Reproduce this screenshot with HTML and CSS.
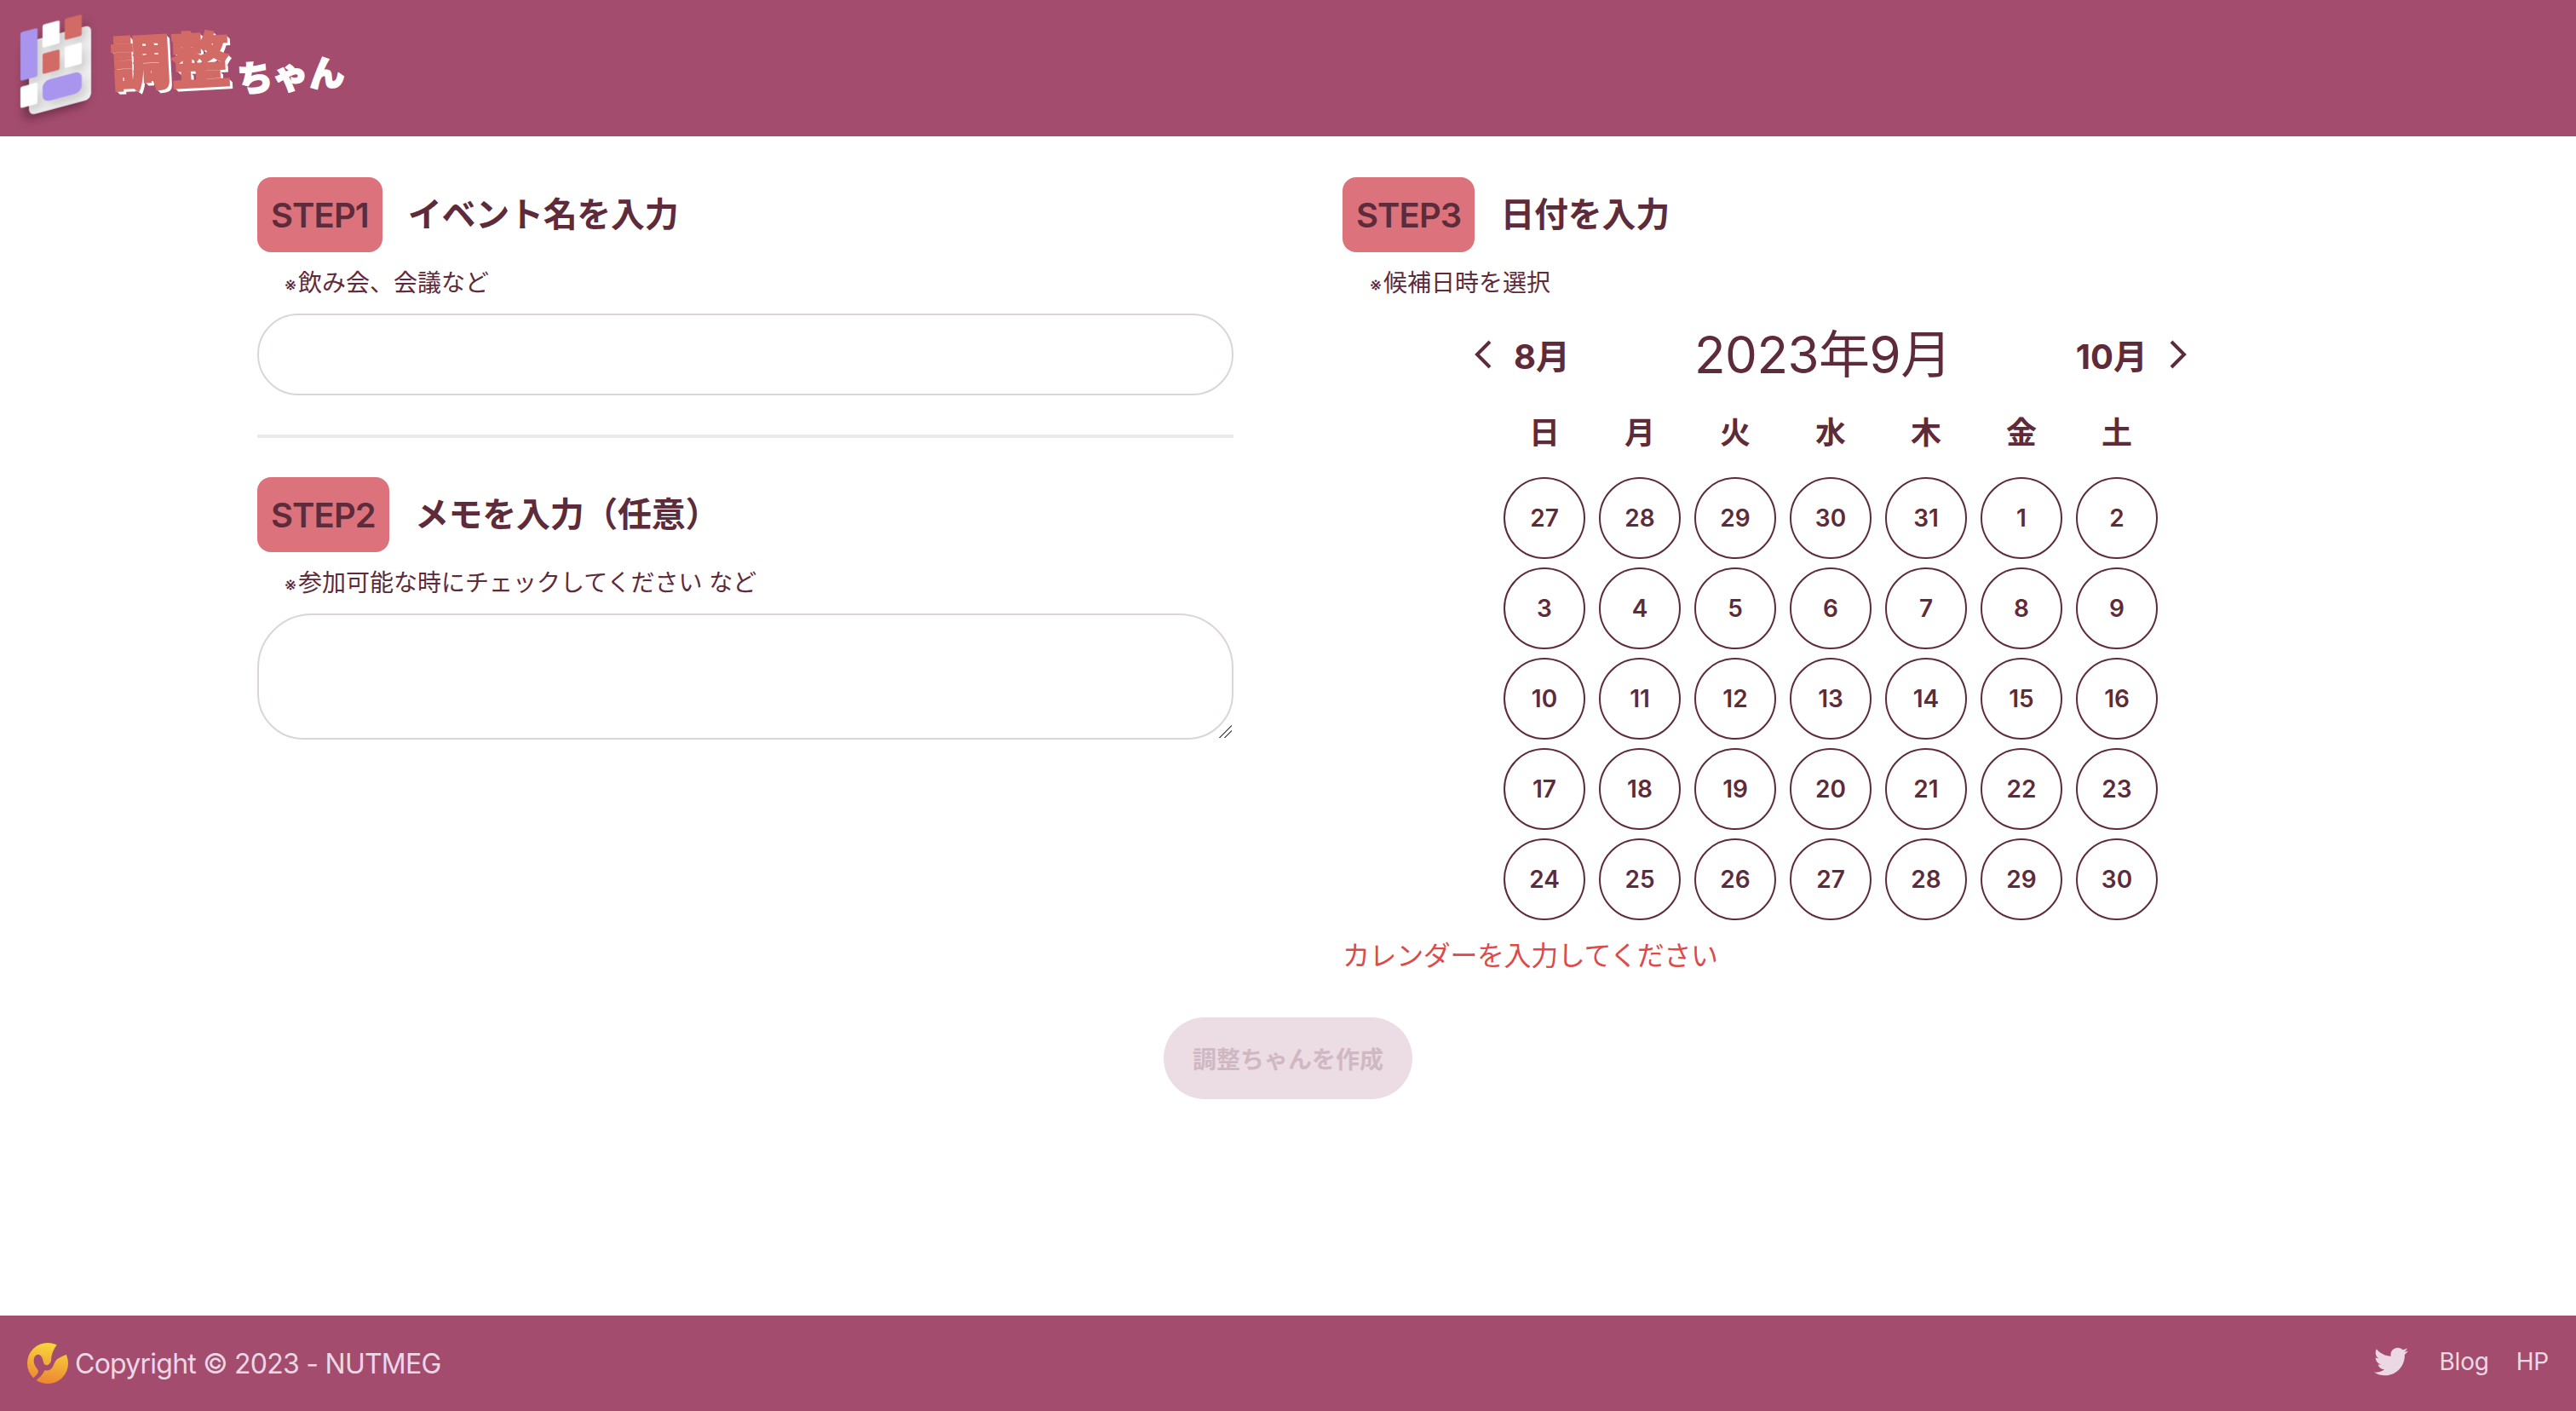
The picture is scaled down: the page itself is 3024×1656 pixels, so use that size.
FILE: index.html
```html
<!DOCTYPE html>
<html lang="ja">
<head>
<meta charset="utf-8">
<title>調整ちゃん</title>
<link rel="stylesheet" href="styles.css">
</head>
<body>
<header class="site-header">
  <svg class="logo-mark" viewBox="0 0 130 150" width="130" height="150" aria-hidden="true">
    <g transform="skewY(-15)">
      <rect class="plate" x="34" y="57.7" width="73" height="87" rx="7"/>
      <rect class="tile purple" x="24" y="44.4" width="20" height="57" rx="2"/>
      <rect class="tile white" x="50" y="42.4" width="20" height="27" rx="2"/>
      <rect class="tile red" x="76" y="42.4" width="20" height="25" rx="2"/>
      <rect class="tile red" x="50" y="76.4" width="20" height="24" rx="2"/>
      <rect class="tile white" x="76" y="75.4" width="20" height="25" rx="2"/>
      <rect class="tile white" x="24" y="108.4" width="20" height="25" rx="2"/>
      <rect class="tile purple" x="50" y="108.7" width="46" height="25" rx="8"/>
    </g>
  </svg>
  <div class="wordmark">
    <span class="word-kanji">調整</span>
    <span class="word-kana">ちゃん</span>
  </div>
</header>

<main class="content">
  <div class="columns">
    <section class="col">
      <div class="step-head">
        <span class="badge">STEP1</span>
        <h2 class="step-title">イベント名を入力</h2>
      </div>
      <p class="note"><span class="mark">※</span>飲み会、会議など</p>
      <input class="field" type="text">
      <hr class="divider">
      <div class="step-head">
        <span class="badge">STEP2</span>
        <h2 class="step-title">メモを入力（任意）</h2>
      </div>
      <p class="note"><span class="mark">※</span>参加可能な時にチェックしてください など</p>
      <textarea class="field area"></textarea>
    </section>

    <section class="col">
      <div class="step-head">
        <span class="badge">STEP3</span>
        <h2 class="step-title">日付を入力</h2>
      </div>
      <p class="note"><span class="mark">※</span>候補日時を選択</p>
      <div class="cal-nav">
        <span class="cal-link">
          <svg class="chev" viewBox="0 0 24 36"><path d="M20 3 5 18l15 15"/></svg>
          <span>8月</span>
        </span>
        <span class="cal-title">2023年9月</span>
        <span class="cal-link">
          <span>10月</span>
          <svg class="chev" viewBox="0 0 24 36"><path d="M4 3l15 15L4 33"/></svg>
        </span>
      </div>
      <div class="cal-grid">
        <span class="dow">日</span><span class="dow">月</span><span class="dow">火</span><span class="dow">水</span><span class="dow">木</span><span class="dow">金</span><span class="dow">土</span>
        <button class="day">27</button><button class="day">28</button><button class="day">29</button><button class="day">30</button><button class="day">31</button><button class="day">1</button><button class="day">2</button>
        <button class="day">3</button><button class="day">4</button><button class="day">5</button><button class="day">6</button><button class="day">7</button><button class="day">8</button><button class="day">9</button>
        <button class="day">10</button><button class="day">11</button><button class="day">12</button><button class="day">13</button><button class="day">14</button><button class="day">15</button><button class="day">16</button>
        <button class="day">17</button><button class="day">18</button><button class="day">19</button><button class="day">20</button><button class="day">21</button><button class="day">22</button><button class="day">23</button>
        <button class="day">24</button><button class="day">25</button><button class="day">26</button><button class="day">27</button><button class="day">28</button><button class="day">29</button><button class="day">30</button>
      </div>
      <p class="error">カレンダーを入力してください</p>
    </section>
  </div>
  <div class="actions">
    <button class="submit" disabled>調整ちゃんを作成</button>
  </div>
</main>

<footer class="site-footer">
  <div class="foot-left">
    <svg class="foot-logo" viewBox="0 0 48 48" width="48" height="48" aria-hidden="true">
      <defs>
        <linearGradient id="nutmeg" x1="0.6" y1="0" x2="0.4" y2="1">
          <stop offset="0" stop-color="#f8d93c"/>
          <stop offset="1" stop-color="#ec8432"/>
        </linearGradient>
      </defs>
      <circle cx="24" cy="24" r="24" fill="url(#nutmeg)"/>
      <path class="foot-swirl" d="M37 0C31 6 28 14 28 21C27 25 24 27 21.5 26C19 25 19 22 18 19C17 15 14 13 11.5 14C8 15 7 20 8 24C9 28 12 30 13 33C13 36 10 39 6 42L9 45C15 41 19 36 20.5 32C23 33 27 33 30 28C32 24 33 20 37 18C40 16 43 15 48 13L46 4L40 -1Z"/>
    </svg>
    <span class="copy">Copyright © 2023 - NUTMEG</span>
  </div>
  <nav class="foot-right">
    <svg class="tw" viewBox="0 0 512 512" width="40" height="40" aria-hidden="true"><path d="M459.37 151.716c.325 4.548.325 9.097.325 13.645 0 138.72-105.583 298.558-298.558 298.558-59.452 0-114.68-17.219-161.137-47.106 8.447.974 16.568 1.299 25.34 1.299 49.055 0 94.213-16.568 130.274-44.832-46.132-.975-84.792-31.188-98.112-72.772 6.498.974 12.995 1.624 19.818 1.624 9.421 0 18.843-1.3 27.614-3.573-48.081-9.747-84.143-51.98-84.143-102.985v-1.299c13.969 7.797 30.214 12.67 47.431 13.319-28.264-18.843-46.781-51.005-46.781-87.391 0-19.492 5.197-37.36 14.294-52.954 51.655 63.675 129.3 105.258 216.365 109.807-1.624-7.797-2.599-15.918-2.599-24.04 0-57.828 46.782-104.934 104.934-104.934 30.213 0 57.502 12.67 76.67 33.137 23.715-4.548 46.456-13.32 66.599-25.34-7.798 24.366-24.366 44.833-46.132 57.827 21.117-2.273 41.584-8.122 60.426-16.243-14.292 20.791-32.161 39.308-52.628 54.253z"/></svg>
    <a class="foot-link">Blog</a>
    <a class="foot-link">HP</a>
  </nav>
</footer>
</body>
</html>
```

FILE: styles.css
```css
* { box-sizing: border-box; }

html, body { height: 100%; }

body {
  margin: 0;
  min-height: 100vh;
  display: flex;
  flex-direction: column;
  background: #fff;
  color: #5e2b3a;
  font-family: Inter, "Noto Sans CJK JP", sans-serif;
}

.site-header {
  flex: none;
  height: 160px;
  background: #a34c6e;
  display: flex;
  align-items: flex-start;
  overflow: hidden;
}

.logo-mark { flex: none; width: 130px; height: 150px; overflow: visible; }
.plate { fill: #f5f4f5; filter: drop-shadow(-5px 5px 6px rgba(50, 10, 30, .4)); }
.tile { filter: drop-shadow(6px 8px 6px rgba(0, 0, 0, .16)); }
.tile.purple { fill: #a995ee; }
.tile.white { fill: #fff; }
.tile.red { fill: #d26a66; }

.wordmark {
  display: flex;
  align-items: flex-end;
  height: 150px;
  padding-bottom: 44px;
}

.word-kanji {
  font-family: "Noto Sans CJK JP", sans-serif;
  font-weight: 900;
  font-size: 70px;
  line-height: 76px;
  color: #d26a66;
  -webkit-text-stroke: 2px #d26a66;
  text-shadow: 1px 1px 0 #fff, 2px 2px 0 #fff, 3px 3px 0 #fff, 4px 4px 0 #fff;
  transform: rotate(-3deg);
}

.word-kana {
  font-family: "Noto Sans CJK JP", sans-serif;
  font-weight: 900;
  font-size: 42px;
  line-height: 48px;
  color: #fff;
  -webkit-text-stroke: 1.5px #fff;
  margin: 0 0 -4px 8px;
  transform: rotate(-4deg);
}

.content {
  flex: 1;
  padding: 48px 302px 0;
}

.columns {
  display: grid;
  grid-template-columns: 1146px 1146px;
  column-gap: 128px;
}

.step-head {
  display: flex;
  align-items: center;
  gap: 30px;
}

.badge {
  height: 88px;
  padding: 0 16px;
  display: flex;
  align-items: center;
  background: #dc737c;
  border-radius: 16px;
  font-size: 40px;
  font-weight: 600;
  letter-spacing: -.9px;
}

.step-title {
  margin: 0;
  font-size: 40px;
  line-height: 56px;
  font-weight: 700;
  letter-spacing: -.3px;
}

.note {
  margin: 16px 0 14px 32px;
  font-size: 28px;
  line-height: 40px;
}

.mark { font-size: 22px; margin-right: 2px; }

.field {
  display: block;
  width: 100%;
  height: 96px;
  margin: 0;
  padding: 0 32px;
  border: 2px solid #dcd5d8;
  border-radius: 48px;
  background: #fff;
  font: inherit;
  outline: none;
}

.field.area {
  height: 148px;
  margin-top: 2px;
  border-radius: 64px 64px 54px 54px;
  padding: 16px 32px;
}

.field.area::-webkit-resizer {
  background: linear-gradient(135deg, transparent 0 48%, #666 48% 56%, transparent 56% 68%, #666 68% 75%, transparent 75%);
}

.divider {
  margin: 46px 0 46px;
  border: 0;
  height: 4px;
  background: #ede8ea;
}

.cal-nav {
  width: 840px;
  margin: 24px auto 0 153px;
  height: 76px;
  display: flex;
  align-items: center;
  justify-content: space-between;
}

.cal-link {
  display: flex;
  align-items: center;
  gap: 24px;
  font-size: 40px;
  font-weight: 700;
}

.chev { width: 24px; height: 36px; fill: none; stroke: #5e2b3a; stroke-width: 4; }

.cal-title { font-size: 60px; line-height: 76px; font-weight: 400; letter-spacing: -.5px; }

.cal-grid {
  width: 768px;
  margin: 30px 0 0 189px;
  display: grid;
  grid-template-columns: repeat(7, 96px);
  column-gap: 16px;
  row-gap: 10px;
  justify-items: center;
}

.dow {
  font-size: 36px;
  line-height: 48px;
  font-weight: 700;
  margin-bottom: 18px;
}

.day {
  width: 96px;
  height: 96px;
  padding: 0;
  border: 2px solid #5e2b3a;
  border-radius: 50%;
  background: #fff;
  color: #5e2b3a;
  font: 600 28px Inter, sans-serif;
}

.error {
  margin: 20px 0 0;
  font-size: 32px;
  line-height: 44px;
  letter-spacing: -.4px;
  color: #dc4a4a;
}

.actions {
  display: flex;
  justify-content: center;
  margin-top: 50px;
}

.submit {
  width: 292px;
  height: 96px;
  border: 0;
  border-radius: 48px;
  background: #ecdce3;
  color: #d0b8c3;
  font: 600 28px Inter, "Noto Sans CJK JP", sans-serif;
}

.site-footer {
  flex: none;
  height: 112px;
  background: #a34c6e;
  color: #ecd7e5;
  display: flex;
  align-items: center;
  justify-content: space-between;
  padding: 0 32px;
}

.foot-left {
  display: flex;
  align-items: center;
  gap: 8px;
  font-size: 32px;
}

.copy { letter-spacing: -.75px; }

.foot-logo { flex: none; }
.foot-swirl { fill: #a34c6e; }

.foot-right {
  display: flex;
  align-items: center;
  gap: 32px;
  font-size: 28px;
  margin-top: -4px;
}

.tw { fill: #ecd7e5; margin-right: 4px; }
.foot-link { color: #ecd7e5; letter-spacing: -.2px; }
```
